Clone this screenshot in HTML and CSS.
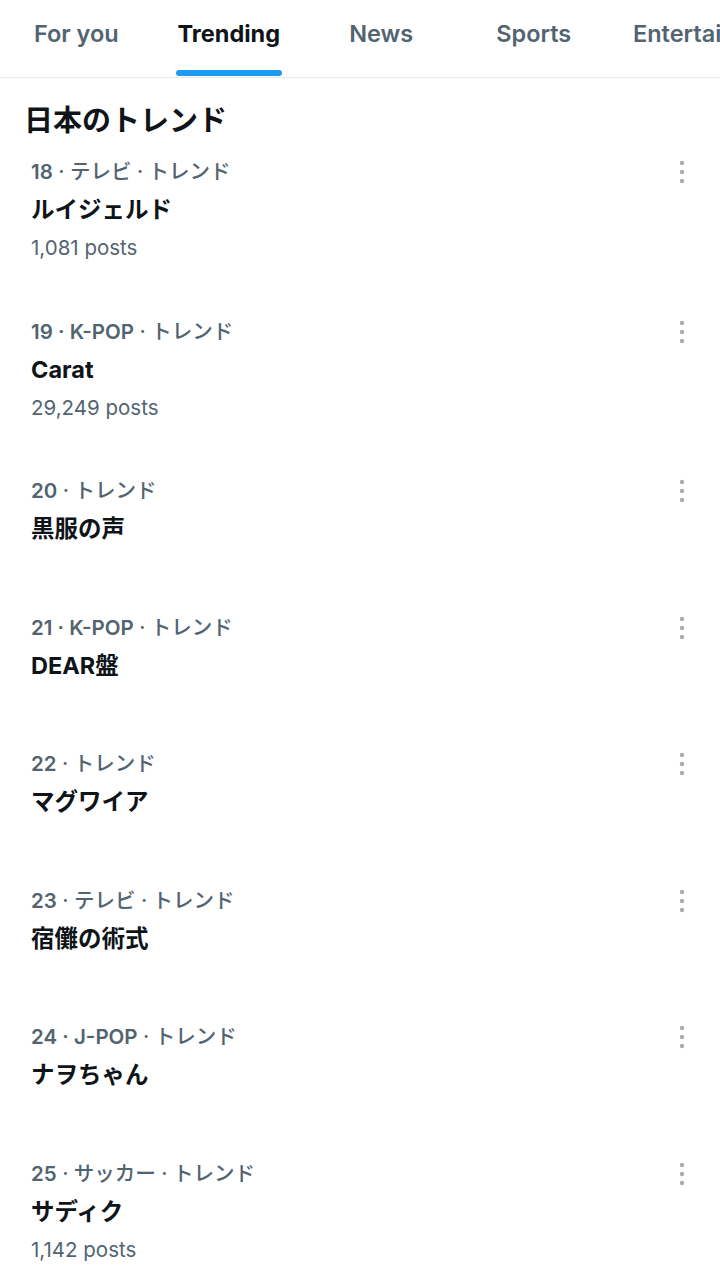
FILE: index.html
```html
<!DOCTYPE html>
<html lang="ja">
<head>
<meta charset="utf-8">
<title>Trending</title>
<link rel="stylesheet" href="styles.css">
</head>
<body>
<nav class="tabs">
  <div class="tab"><span class="tab-label">For you</span></div>
  <div class="tab active"><span class="tab-label">Trending</span><span class="tab-bar"></span></div>
  <div class="tab"><span class="tab-label">News</span></div>
  <div class="tab"><span class="tab-label">Sports</span></div>
  <div class="tab tab-last"><span class="tab-label">Entertainment</span></div>
</nav>
<main>
  <h2 class="section-title">日本のトレンド</h2>
  <ul class="trends">
    <li class="trend">
      <div class="trend-body">
        <div class="meta"><span class="num">18</span> · テレビ · トレンド</div>
        <div class="name">ルイジェルド</div>
        <div class="posts">1,081 posts</div>
      </div>
      <svg class="more" viewBox="0 0 20 28" width="20" height="28"><circle cx="10" cy="5" r="2.2"/><circle cx="10" cy="14" r="2.2"/><circle cx="10" cy="23" r="2.2"/></svg>
    </li>
    <li class="trend">
      <div class="trend-body">
        <div class="meta"><span class="num">19 · K-POP</span> · トレンド</div>
        <div class="name">Carat</div>
        <div class="posts">29,249 posts</div>
      </div>
      <svg class="more" viewBox="0 0 20 28" width="20" height="28"><circle cx="10" cy="5" r="2.2"/><circle cx="10" cy="14" r="2.2"/><circle cx="10" cy="23" r="2.2"/></svg>
    </li>
    <li class="trend">
      <div class="trend-body">
        <div class="meta"><span class="num">20</span> · トレンド</div>
        <div class="name">黒服の声</div>
      </div>
      <svg class="more" viewBox="0 0 20 28" width="20" height="28"><circle cx="10" cy="5" r="2.2"/><circle cx="10" cy="14" r="2.2"/><circle cx="10" cy="23" r="2.2"/></svg>
    </li>
    <li class="trend">
      <div class="trend-body">
        <div class="meta"><span class="num">21 · K-POP</span> · トレンド</div>
        <div class="name">DEAR盤</div>
      </div>
      <svg class="more" viewBox="0 0 20 28" width="20" height="28"><circle cx="10" cy="5" r="2.2"/><circle cx="10" cy="14" r="2.2"/><circle cx="10" cy="23" r="2.2"/></svg>
    </li>
    <li class="trend">
      <div class="trend-body">
        <div class="meta"><span class="num">22</span> · トレンド</div>
        <div class="name">マグワイア</div>
      </div>
      <svg class="more" viewBox="0 0 20 28" width="20" height="28"><circle cx="10" cy="5" r="2.2"/><circle cx="10" cy="14" r="2.2"/><circle cx="10" cy="23" r="2.2"/></svg>
    </li>
    <li class="trend">
      <div class="trend-body">
        <div class="meta"><span class="num">23</span> · テレビ · トレンド</div>
        <div class="name">宿儺の術式</div>
      </div>
      <svg class="more" viewBox="0 0 20 28" width="20" height="28"><circle cx="10" cy="5" r="2.2"/><circle cx="10" cy="14" r="2.2"/><circle cx="10" cy="23" r="2.2"/></svg>
    </li>
    <li class="trend">
      <div class="trend-body">
        <div class="meta"><span class="num">24 · J-POP</span> · トレンド</div>
        <div class="name">ナヲちゃん</div>
      </div>
      <svg class="more" viewBox="0 0 20 28" width="20" height="28"><circle cx="10" cy="5" r="2.2"/><circle cx="10" cy="14" r="2.2"/><circle cx="10" cy="23" r="2.2"/></svg>
    </li>
    <li class="trend">
      <div class="trend-body">
        <div class="meta"><span class="num">25</span> · サッカー · トレンド</div>
        <div class="name">サディク</div>
        <div class="posts">1,142 posts</div>
      </div>
      <svg class="more" viewBox="0 0 20 28" width="20" height="28"><circle cx="10" cy="5" r="2.2"/><circle cx="10" cy="14" r="2.2"/><circle cx="10" cy="23" r="2.2"/></svg>
    </li>
  </ul>
</main>
</body>
</html>
```
FILE: styles.css
```css
html, body {
  margin: 0;
  padding: 0;
  background: #ffffff;
}
body {
  width: 720px;
  height: 1280px;
  overflow: hidden;
  font-family: Inter, "Noto Sans CJK JP", sans-serif;
  color: #0f1419;
}
.tabs {
  display: flex;
  height: 77px;
  border-bottom: 1px solid #e7eaeb;
  overflow: hidden;
}
.tab {
  flex: 0 0 152.5px;
  display: flex;
  flex-direction: column;
  align-items: center;
  padding-top: 19px;
  box-sizing: border-box;
}
.tab-last {
  flex: 0 0 auto;
  align-items: flex-start;
  padding-left: 23px;
}
.tab-label {
  font-size: 23.5px;
  line-height: 30px;
  font-weight: 600;
  color: #536471;
  white-space: nowrap;
}
.active .tab-label {
  color: #0f1419;
  font-weight: 700;
}
.tab-bar {
  display: block;
  width: 106px;
  height: 6px;
  margin-top: 21px;
  border-radius: 3px;
  background: #1d9bf0;
}
.section-title {
  margin: 0;
  padding: 20px 0 4px 24px;
  font-size: 29px;
  line-height: 40px;
  font-weight: 700;
  font-family: "Noto Sans CJK JP", sans-serif;
}
.trends {
  list-style: none;
  margin: 0;
  padding: 0;
}
.trend {
  display: flex;
  align-items: flex-start;
  padding: 11px 28px 34px 31px;
}
.trend-body {
  flex: 1;
  min-height: 91.6px;
}
.meta {
  font-size: 20.5px;
  line-height: 38px;
  color: #536471;
  font-weight: 500;
}
.num {
  font-weight: 600;
}
.name {
  font-size: 23.5px;
  line-height: 38px;
  font-weight: 700;
}
.posts {
  font-size: 20.5px;
  line-height: 38.5px;
  color: #536471;
}
.more {
  fill: #a3adb6;
  margin-top: 5px;
}
```
